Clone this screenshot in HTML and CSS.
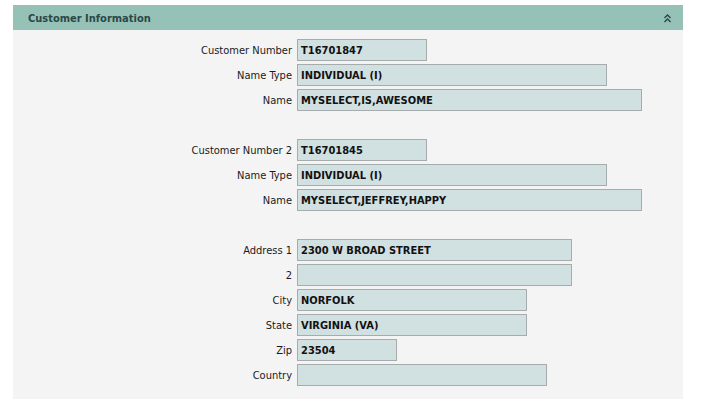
FILE: index.html
```html
<!DOCTYPE html>
<html>
<head>
<meta charset="utf-8">
<link rel="stylesheet" href="styles.css">
</head>
<body>
<div class="page">
  <section class="panel">
    <header class="panel-head">
      <span class="panel-title">Customer Information</span>
      <svg class="collapse" width="7" height="9" viewBox="0 0 7 9">
        <path d="M0.5 4 L3.5 1 L6.5 4 M0.5 8 L3.5 5 L6.5 8" fill="none" stroke="#2a4545" stroke-width="1.4"/>
      </svg>
    </header>
    <div class="panel-body">
      <div class="form">
        <label class="lbl">Customer Number</label><div class="val w130">T16701847</div>
        <label class="lbl">Name Type</label><div class="val w310">INDIVIDUAL (I)</div>
        <label class="lbl">Name</label><div class="val w345">MYSELECT,IS,AWESOME</div>
        <div class="spacer"></div>
        <label class="lbl">Customer Number 2</label><div class="val w130">T16701845</div>
        <label class="lbl">Name Type</label><div class="val w310">INDIVIDUAL (I)</div>
        <label class="lbl">Name</label><div class="val w345">MYSELECT,JEFFREY,HAPPY</div>
        <div class="spacer"></div>
        <label class="lbl">Address 1</label><div class="val w275">2300 W BROAD STREET</div>
        <label class="lbl">2</label><div class="val w275"></div>
        <label class="lbl">City</label><div class="val w230">NORFOLK</div>
        <label class="lbl">State</label><div class="val w230">VIRGINIA (VA)</div>
        <label class="lbl">Zip</label><div class="val w100">23504</div>
        <label class="lbl">Country</label><div class="val w250"></div>
      </div>
    </div>
  </section>
</div>
</body>
</html>
```
FILE: styles.css
```css
html, body {
  margin: 0;
  padding: 0;
  background: #ffffff;
}
.page {
  padding: 5px 0 0 13px;
}
.panel {
  width: 670px;
  height: 394px;
  background: #f4f4f4;
  font-family: "DejaVu Sans Condensed", "DejaVu Sans", sans-serif;
  font-size: 11px;
  color: #1a1a1a;
  display: flex;
  flex-direction: column;
}
.panel-head {
  height: 25px;
  background: #96c1b6;
  display: flex;
  align-items: center;
  justify-content: space-between;
  padding: 0 12px 0 15px;
}
.panel-title {
  font-weight: bold;
  color: #2a4848;
  font-size: 11px;
  padding-top: 1px;
}
.collapse {
  display: block;
  margin-top: 1px;
}
.panel-body {
  padding-top: 9px;
}
.form {
  display: grid;
  grid-template-columns: 279px 1fr;
  column-gap: 5px;
  row-gap: 3px;
  align-items: center;
}
.lbl {
  text-align: right;
  white-space: nowrap;
  line-height: 22px;
  padding-top: 1px;
  height: 22px;
  box-sizing: border-box;
}
.val {
  box-sizing: border-box;
  height: 22px;
  border: 1px solid #a6abab;
  background: #d1e0e0;
  font-weight: bold;
  color: #111;
  padding: 1px 0 0 3px;
  line-height: 20px;
  white-space: nowrap;
}
.spacer {
  grid-column: 1 / span 2;
  height: 22px;
}
.w100 { width: 100px; }
.w130 { width: 130px; }
.w230 { width: 230px; }
.w250 { width: 250px; }
.w275 { width: 275px; }
.w310 { width: 310px; }
.w345 { width: 345px; }
```
